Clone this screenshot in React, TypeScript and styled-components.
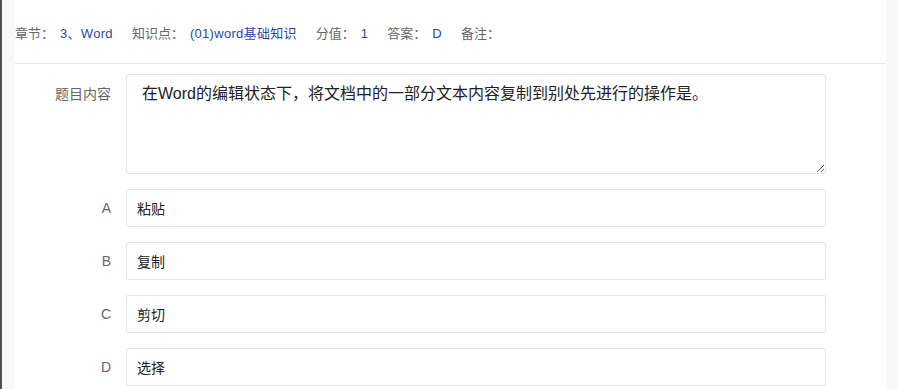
import styled, { createGlobalStyle } from 'styled-components';

const GlobalStyle = createGlobalStyle`
  html, body {
    margin: 0;
    padding: 0;
    background: #f8f8f8;
    font-family: 'Liberation Sans', 'Noto Sans CJK SC', sans-serif;
  }
`;

interface MetaItem {
  label: string;
  value: string;
}

const meta: MetaItem[] = [
  { label: '章节：', value: '3、Word' },
  { label: '知识点：', value: '(01)word基础知识' },
  { label: '分值：', value: '1' },
  { label: '答案：', value: 'D' },
  { label: '备注：', value: '' },
];

const options = [
  { key: 'A', text: '粘贴' },
  { key: 'B', text: '复制' },
  { key: 'C', text: '剪切' },
  { key: 'D', text: '选择' },
];

const App = () => {
  return (
    <Page>
      <GlobalStyle />
      <Strip />
      <Panel>
        <Header>
          {meta.map(item => (
            <MetaEntry key={item.label}>
              <MetaLabel>{item.label}</MetaLabel>
              {item.value && <MetaValue>{item.value}</MetaValue>}
            </MetaEntry>
          ))}
        </Header>

        <Form>
          <Row>
            <Label $tall>题目内容</Label>
            <Content
              readOnly
              value="在Word的编辑状态下，将文档中的一部分文本内容复制到别处先进行的操作是。"
            />
          </Row>
          {options.map(opt => (
            <Row key={opt.key}>
              <Label>{opt.key}</Label>
              <OptionInput readOnly value={opt.text} />
            </Row>
          ))}
        </Form>
      </Panel>
    </Page>
  );
};

const Page = styled.div`
  display: flex;
  height: 389px;
  overflow: hidden;
  background: #f8f8f8;
`;

const Strip = styled.div`
  width: 2px;
  background: #4d4f55;
  margin-right: 13px;
  flex-shrink: 0;
`;

const Panel = styled.div`
  width: 871px;
  background: #fff;
  flex-shrink: 0;
`;

const Header = styled.div`
  display: flex;
  align-items: center;
  gap: 19px;
  padding: 25px 0 20px;
  border-bottom: 1px solid #e6e6e6;
  font-size: 13px;
  line-height: 18px;
`;

const MetaEntry = styled.div`
  display: flex;
  align-items: center;
`;

const MetaLabel = styled.span`
  color: #666;
`;

const MetaValue = styled.span`
  color: #2a48a2;
  margin-left: 6px;
  letter-spacing: 0.3px;
`;

const Form = styled.div`
  padding-top: 10px;
  display: flex;
  flex-direction: column;
  gap: 15px;
`;

const Row = styled.div`
  display: flex;
  align-items: flex-start;
`;

const Label = styled.label<{ $tall?: boolean }>`
  width: 96px;
  padding-right: 15px;
  text-align: right;
  color: #666;
  font-size: 14px;
  line-height: 20px;
  padding-top: ${props => (props.$tall ? '10px' : '9px')};
  flex-shrink: 0;
`;

const Content = styled.textarea`
  box-sizing: border-box;
  width: 700px;
  height: 100px;
  margin: 0;
  padding: 7px 15px;
  border: 1px solid #e6e6e6;
  border-radius: 2px;
  font-family: 'Liberation Sans', 'Noto Sans CJK SC', sans-serif;
  font-size: 16px;
  line-height: 24px;
  color: #222;
  outline: none;
  background: #fff;
`;

const OptionInput = styled.input`
  box-sizing: border-box;
  width: 700px;
  height: 38px;
  margin: 0;
  padding: 0 10px;
  border: 1px solid #e6e6e6;
  border-radius: 2px;
  font-family: 'Liberation Sans', 'Noto Sans CJK SC', sans-serif;
  font-size: 14px;
  color: #222;
  outline: none;
  background: #fff;
`;

export default App;
